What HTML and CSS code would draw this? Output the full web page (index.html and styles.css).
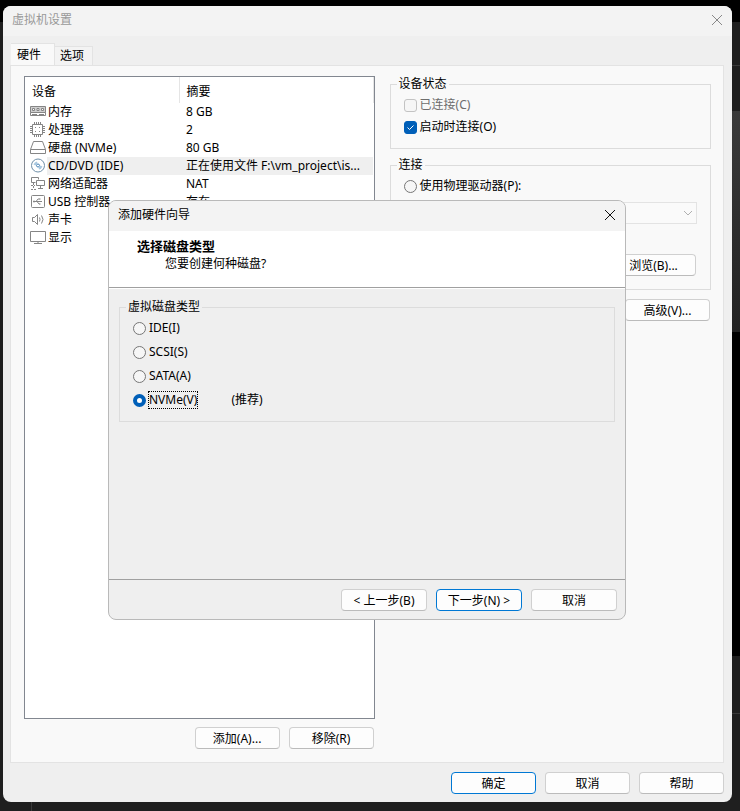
FILE: index.html
```html
<!DOCTYPE html>
<html lang="zh-CN">

<head>
    <meta charset="UTF-8">
    <meta name="viewport" content="width=device-width, initial-scale=1.0">
    <title>虚拟机设置</title>
    <link rel="stylesheet" href="styles.css">
</head>

<body>
    <main class="window">
        <header class="title-bar">
            <h1 class="title-text">虚拟机设置</h1>
            <button class="close" type="button" aria-label="关闭">
                <svg width="12" height="12" viewBox="0 0 12 12"><path d="M1 1l10 10M11 1L1 11" /></svg>
            </button>
        </header>

        <nav class="tabs">
            <button class="tab active" type="button">硬件</button>
            <button class="tab" type="button">选项</button>
        </nav>

        <div class="panel">
            <section class="left">
                <div class="list">
                    <table class="device-table">
                        <thead>
                            <tr>
                                <th class="col-device">设备</th>
                                <th class="col-summary">摘要</th>
                            </tr>
                        </thead>
                        <tbody>
                            <tr>
                                <td>
                                    <div class="device">
                                        <svg class="icon" viewBox="0 0 16 16">
                                            <path fill="#d0d0d0" d="M.5 2.5h15v6H.5z" />
                                            <path d="M.5 8.5v3h15v-3M2 10.5h5M9 10.5h5" />
                                            <path fill="#fff" d="M2.5 4.5h2v2h-2zM7 4.5h2v2H7zM11.5 4.5h2v2h-2z" />
                                        </svg>
                                        <span>内存</span>
                                    </div>
                                </td>
                                <td>8 GB</td>
                            </tr>
                            <tr>
                                <td>
                                    <div class="device">
                                        <svg class="icon" viewBox="0 0 16 16">
                                            <path d="M2.5 2.5h10v10h-10z" />
                                            <path d="M4.5 0v2M6.5 0v2M8.5 0v2M10.5 0v2M4.5 13v2M6.5 13v2M8.5 13v2M10.5 13v2M0 4.5h2M0 6.5h2M0 8.5h2M0 10.5h2M13 4.5h2M13 6.5h2M13 8.5h2M13 10.5h2" />
                                            <path d="M5 5.5h1M9 5.5h1M5 9.5h1M9 9.5h1" />
                                        </svg>
                                        <span>处理器</span>
                                    </div>
                                </td>
                                <td>2</td>
                            </tr>
                            <tr>
                                <td>
                                    <div class="device">
                                        <svg class="icon" viewBox="0 0 16 16">
                                            <path d="M.5 9.5L3.5 1.5h9l3 8v4H.5zM.5 9.5h15" />
                                        </svg>
                                        <span>硬盘 (NVMe)</span>
                                    </div>
                                </td>
                                <td>80 GB</td>
                            </tr>
                            <tr class="selected">
                                <td>
                                    <div class="device">
                                        <svg class="icon disc" viewBox="0 0 16 16">
                                            <circle cx="8" cy="7.5" r="6.5" />
                                            <circle class="hub" cx="8" cy="7.5" r="1.5" />
                                            <path class="shine" d="M3.5 6.5Q4.500 4 7 3.500l.5 2L5.500 7.500zM12.500 8.500Q11.500 11 9 11.500l-.5-2 2-2z" />
                                        </svg>
                                        <span>CD/DVD (IDE)</span>
                                    </div>
                                </td>
                                <td>正在使用文件 F:\vm_project\is...</td>
                            </tr>
                            <tr>
                                <td>
                                    <div class="device">
                                        <svg class="icon" viewBox="0 0 16 16">
                                            <path d="M5.5 6.5h-4v-5h7v2M6.5 4.5h8v5h-8zM10.5 10v2M8 12.5h5" />
                                            <path stroke-dasharray="2 1" d="M3.5 7v6M1 9.5h4M1 13.5h6" />
                                        </svg>
                                        <span>网络适配器</span>
                                    </div>
                                </td>
                                <td>NAT</td>
                            </tr>
                            <tr>
                                <td>
                                    <div class="device">
                                        <svg class="icon" viewBox="0 0 16 16">
                                            <rect x="1.5" y="1.5" width="13" height="12" rx="1" />
                                            <path d="M4 7.5h8M6 7.5l2-2.500h2M7 7.5l2 2.500h1M10 4.500v1M10 9.500v1" />
                                            <path d="M3.5 7h1v1h-1z" />
                                        </svg>
                                        <span>USB 控制器</span>
                                    </div>
                                </td>
                                <td>存在</td>
                            </tr>
                            <tr>
                                <td>
                                    <div class="device">
                                        <svg class="icon" viewBox="0 0 16 16">
                                            <path d="M2.5 5.5h2l3-3v10l-3-3h-2z" />
                                            <path d="M9.5 5.5q1 2 0 4M11.5 3.500q3 4 0 8" />
                                        </svg>
                                        <span>声卡</span>
                                    </div>
                                </td>
                                <td></td>
                            </tr>
                            <tr>
                                <td>
                                    <div class="device">
                                        <svg class="icon" viewBox="0 0 16 16">
                                            <path d="M.5 1.5h15v10H.5zM4 13.500h8M8 12v1" />
                                        </svg>
                                        <span>显示</span>
                                    </div>
                                </td>
                                <td></td>
                            </tr>
                        </tbody>
                    </table>
                </div>
                <div class="btn-row">
                    <button class="btn" type="button">添加(A)...</button>
                    <button class="btn" type="button">移除(R)</button>
                </div>
            </section>

            <section class="right">
                <fieldset class="group">
                    <legend>设备状态</legend>
                    <label class="option disabled"><input class="check" type="checkbox" disabled>已连接(C)</label>
                    <label class="option"><input class="check" type="checkbox" checked>启动时连接(O)</label>
                </fieldset>
                <fieldset class="group connection">
                    <legend>连接</legend>
                    <label class="option"><input class="radio" type="radio" name="source">使用物理驱动器(P):</label>
                    <div class="drive">
                        <select class="drive-select" aria-label="物理驱动器" disabled></select>
                        <svg class="arrow" width="10" height="6" viewBox="0 0 10 6"><path d="M1 1l4 4 4-4" /></svg>
                    </div>
                    <button class="btn browse" type="button">浏览(B)...</button>
                </fieldset>
                <button class="btn advanced" type="button">高级(V)...</button>
            </section>
        </div>

        <footer class="btn-row footer">
            <button class="btn primary" type="button">确定</button>
            <button class="btn" type="button">取消</button>
            <button class="btn" type="button">帮助</button>
        </footer>
    </main>

    <!-- 添加硬件向导 -->
    <div class="dialog" role="dialog" aria-labelledby="wizard-title">
        <div class="title-bar">
            <h2 class="title-text" id="wizard-title">添加硬件向导</h2>
            <button class="close" type="button" aria-label="关闭">
                <svg width="12" height="12" viewBox="0 0 12 12"><path d="M1 1l10 10M11 1L1 11" /></svg>
            </button>
        </div>
        <div class="dialog-head">
            <h3>选择磁盘类型</h3>
            <p>您要创建何种磁盘?</p>
        </div>
        <div class="dialog-body">
            <fieldset class="group disk-type">
                <legend>虚拟磁盘类型</legend>
                <label class="option"><input class="radio" type="radio" name="disk">IDE(I)</label>
                <label class="option"><input class="radio" type="radio" name="disk">SCSI(S)</label>
                <label class="option"><input class="radio" type="radio" name="disk">SATA(A)</label>
                <div class="option-line">
                    <label class="option"><input class="radio" type="radio" name="disk" checked><span class="focus">NVMe(V)</span></label>
                    <span>(推荐)</span>
                </div>
            </fieldset>
        </div>
        <div class="btn-row dialog-foot">
            <button class="btn" type="button">&lt; 上一步(B)</button>
            <button class="btn primary" type="button">下一步(N) &gt;</button>
            <button class="btn" type="button">取消</button>
        </div>
    </div>
</body>

</html>
```

FILE: styles.css
```css
* {
    box-sizing: border-box;
    margin: 0;
}

body {
    display: flex;
    min-height: 100vh;
    padding: 6px 8px 9px 3px;
    /* 窗口后面露出来的深色桌面 */
    background:
        linear-gradient(#000, #000) right 332px / 12px 324px no-repeat,
        linear-gradient(#3a3a3a, #222) right 111px / 12px 221px no-repeat,
        linear-gradient(#3a3a3a, #3a3a3a) right 65px / 12px 1px no-repeat,
        linear-gradient(#3a3a3a, #3a3a3a) right 713px / 12px 1px no-repeat,
        linear-gradient(#3a3a3a, #3a3a3a) 31px bottom / 1px 10px no-repeat,
        linear-gradient(#000 22px, #1f1f1f 22px);
    color: #000;
    font-family: "Noto Sans", "Noto Sans CJK SC", sans-serif;
    font-size: 12px;
    line-height: 16px;
}

button,
input,
select {
    font: inherit;
    color: inherit;
}

.window {
    flex: 1;
    display: flex;
    flex-direction: column;
    background-color: #efefef;
    border-radius: 8px;
    overflow: hidden;
}

/* 标题栏 */
.title-bar {
    display: flex;
    justify-content: space-between;
    align-items: center;
    height: 30px;
    padding: 0 9px 2px;
    background-color: #f3f3f3;
}

.title-text {
    font-size: 12px;
    font-weight: normal;
}

.window .title-text {
    color: #999;
}

.close {
    display: flex;
    padding: 0;
    border: none;
    background: none;
}

.close svg {
    fill: none;
    stroke: #111;
}

.window .close svg {
    stroke: #888;
}

/* 选项卡 */
.tabs {
    display: flex;
    align-items: flex-end;
    height: 29px;
    padding: 0 8px;
}

.tab {
    height: 19px;
    padding: 0 8px 0 5px;
    border: 1px solid #e3e3e3;
    border-bottom: none;
    border-left: none;
    background-color: #f3f3f3;
}

.tab.active {
    height: 22px;
    padding: 0 13px 0 6px;
    background-color: #f9f9f9;
}

.panel {
    flex: 1;
    display: grid;
    grid-template-columns: 12fr 11fr;
    gap: 15px;
    margin: 0 8px 0 7px;
    padding: 10px 12px 13px 13px;
    border: 1px solid #e3e3e3;
    background-color: #f9f9f9;
}

.left {
    display: flex;
    flex-direction: column;
}

.list {
    flex: 1;
    border: 1px solid #828790;
    background-color: #fff;
}

.device-table {
    width: 100%;
    border-collapse: collapse;
    table-layout: fixed;
}

.device-table th {
    height: 26px;
    padding: 4px 7px 0;
    border-right: 1px solid #e5e5e5;
    font-weight: normal;
    text-align: left;
}

.device-table td {
    height: 18px;
    padding: 0 7px;
    line-height: 18px;
    white-space: nowrap;
}

.col-device {
    width: 154px;
}

.device-table .device {
    display: flex;
    align-items: center;
    gap: 2px;
    margin-left: -2px;
}

.selected {
    background: linear-gradient(90deg, #fff 22px, #efefef 22px);
}

.icon {
    width: 16px;
    height: 16px;
    fill: none;
    stroke: #858585;
}

.disc {
    stroke: #6f8fa8;
}

.disc .hub {
    stroke: #4a86b8;
}

.disc .shine {
    fill: #a9c8e0;
    stroke: none;
}

/* 按钮 */
.btn-row {
    display: flex;
    justify-content: flex-end;
    gap: 9px;
}

.left .btn-row {
    margin-top: 8px;
    padding-right: 1px;
}

.btn {
    width: 85px;
    height: 22px;
    padding: 2px 0 0;
    border: 1px solid #d0d0d0;
    border-bottom-color: #bbb;
    border-radius: 4px;
    background-color: #fdfdfd;
    text-align: center;
}

.btn.primary {
    border-color: #0078d4;
}

.footer {
    padding: 9px 8px 8px;
}

/* 分组框 */
.right {
    min-width: 0;
}

.group {
    min-width: 0;
    padding: 2px 13px 10px;
    border: 1px solid #dcdcdc;
}

.group legend {
    margin-left: -7px;
    padding: 0 2px;
}

.option {
    display: flex;
    align-items: center;
    gap: 3px;
    height: 22px;
}

.disabled {
    color: #6d6d6d;
}

.check,
.radio {
    appearance: none;
    flex: none;
    width: 13px;
    height: 13px;
    border: 1px solid #767676;
    background-color: #f6f6f6;
}

.check {
    border-radius: 3px;
}

.check:disabled {
    border-color: #c3c3c3;
}

.check:checked {
    border-color: #005fb8;
    background: #005fb8 url("data:image/svg+xml,%3Csvg xmlns='http://www.w3.org/2000/svg' viewBox='0 0 11 11'%3E%3Cpath d='M2.5 5.5l2 2 4-4' fill='none' stroke='white'/%3E%3C/svg%3E");
}

.radio {
    border-radius: 50%;
}

.radio:checked {
    border: 4px solid #005fb8;
    background-color: #fff;
}

.connection {
    margin-top: 8px;
    padding-bottom: 13px;
}

.drive {
    display: grid;
    align-items: center;
    margin-top: 5px;
}

.drive-select {
    grid-area: 1 / 1;
    appearance: none;
    width: 100%;
    height: 22px;
    border: 1px solid #e3e3e3;
    background-color: #fafafa;
    opacity: 1;
}

.arrow {
    grid-area: 1 / 1;
    z-index: 1;
    justify-self: end;
    margin-right: 4px;
    fill: none;
    stroke: #b0b0b0;
}

.browse {
    display: block;
    margin: 30px 1px 0 auto;
}

.advanced {
    display: block;
    margin: 9px 1px 0 auto;
}

/* 向导窗口，浮在设置窗口上面 */
.dialog {
    position: absolute;
    top: 200px;
    left: 108px;
    width: 518px;
    height: 420px;
    display: flex;
    flex-direction: column;
    border: 1px solid #b9b9b9;
    border-radius: 8px;
    background-color: #efefef;
    overflow: hidden;
}

.dialog-head {
    height: 57px;
    padding: 6px 28px;
    border-bottom: 1px solid #a0a0a0;
    background-color: #fff;
    line-height: 18px;
}

.dialog-head h3 {
    font-size: 13px;
}

.dialog-head p {
    padding-left: 28px;
}

.dialog-body {
    flex: 1;
    padding: 10px;
    border-top: 1px solid #fff;
}

.disk-type {
    padding-top: 1px;
    padding-bottom: 9px;
}

.disk-type .option {
    height: 24px;
}

.option-line {
    display: flex;
    align-items: center;
    gap: 34px;
}

.focus {
    outline: 1px dotted #000;
}

.dialog-foot {
    padding: 9px 8px 8px;
    border-top: 1px solid #a0a0a0;
}

.dialog-foot .btn {
    width: 86px;
}
```
